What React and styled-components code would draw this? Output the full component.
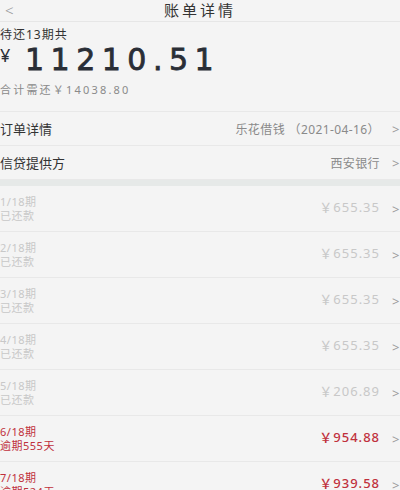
import React from 'react';
import styled, { createGlobalStyle } from 'styled-components';

const installments = [
  { period: '1/18期', status: '已还款', amount: '655.35', overdue: false },
  { period: '2/18期', status: '已还款', amount: '655.35', overdue: false },
  { period: '3/18期', status: '已还款', amount: '655.35', overdue: false },
  { period: '4/18期', status: '已还款', amount: '655.35', overdue: false },
  { period: '5/18期', status: '已还款', amount: '206.89', overdue: false },
  { period: '6/18期', status: '逾期555天', amount: '954.88', overdue: true },
  { period: '7/18期', status: '逾期524天', amount: '939.58', overdue: true },
];

const App = () => {
  return (
    <>
      <GlobalStyle />
      <Page>
        <NavBar>
          <BackButton>&lt;</BackButton>
          <NavTitle>账单详情</NavTitle>
          <span />
        </NavBar>

        <Summary>
          <SummaryLabel>待还13期共</SummaryLabel>
          <BigAmount>
            <Currency>¥</Currency>
            11210.51
          </BigAmount>
          <SummaryTotal>合计需还￥14038.80</SummaryTotal>
        </Summary>

        <InfoList>
          <InfoRow>
            <InfoLabel>订单详情</InfoLabel>
            <InfoValue>乐花借钱 （2021-04-16）</InfoValue>
            <Chevron>&gt;</Chevron>
          </InfoRow>
          <InfoRow>
            <InfoLabel>信贷提供方</InfoLabel>
            <InfoValue>西安银行</InfoValue>
            <Chevron>&gt;</Chevron>
          </InfoRow>
        </InfoList>

        <Band />

        {installments.map((item) => (
          <BillRow key={item.period}>
            <BillInfo>
              <BillText $overdue={item.overdue}>{item.period}</BillText>
              <BillText $overdue={item.overdue}>{item.status}</BillText>
            </BillInfo>
            <BillAmount $overdue={item.overdue}>￥{item.amount}</BillAmount>
            <Chevron>&gt;</Chevron>
          </BillRow>
        ))}
      </Page>
    </>
  );
};

const GlobalStyle = createGlobalStyle`
  html, body {
    margin: 0;
    padding: 0;
    background: #f4f4f4;
  }
  body {
    font-family: 'Noto Sans', 'Noto Sans CJK SC', sans-serif;
    overflow: hidden;
  }
`;

const Page = styled.div`
  width: 400px;
  height: 490px;
  overflow: hidden;
  background: #f4f4f4;
`;

const NavBar = styled.div`
  display: grid;
  grid-template-columns: 1fr auto 1fr;
  align-items: center;
  height: 21px;
  border-bottom: 1px solid #e6e6e6;
`;

const BackButton = styled.span`
  padding-left: 5px;
  color: #9a9a9a;
  font-size: 15px;
  font-weight: 300;
  line-height: 1;
`;

const NavTitle = styled.span`
  color: #333333;
  font-size: 15px;
  letter-spacing: 3px;
  line-height: 1;
`;

const Summary = styled.div`
  display: flex;
  flex-direction: column;
  padding: 6px 0 0;
  height: 83px;
  border-bottom: 1px solid #e8e8e8;
`;

const SummaryLabel = styled.div`
  color: #333333;
  font-size: 12px;
  line-height: 14px;
  letter-spacing: 1px;
`;

const BigAmount = styled.div`
  display: flex;
  align-items: flex-start;
  margin-top: 3px;
  color: #2a2e36;
  font-family: 'DejaVu Sans', sans-serif;
  font-size: 30px;
  line-height: 30px;
  letter-spacing: 6.5px;
  -webkit-text-stroke: 0.8px #2a2e36;
`;

const Currency = styled.span`
  width: 25px;
  margin-top: 1px;
  font-family: 'Noto Sans', sans-serif;
  font-size: 18px;
  line-height: 18px;
  letter-spacing: 0;
  -webkit-text-stroke: 0;
`;

const SummaryTotal = styled.div`
  margin-top: 8px;
  color: #8a8a8a;
  font-size: 11px;
  line-height: 14px;
  letter-spacing: 2.2px;
`;

const InfoList = styled.div`
  display: flex;
  flex-direction: column;
`;

const InfoRow = styled.div`
  display: flex;
  align-items: center;
  height: 33px;
  border-bottom: 1px solid #e8e8e8;
`;

const InfoLabel = styled.span`
  flex: 1;
  color: #333333;
  font-size: 13px;
`;

const InfoValue = styled.span`
  color: #8a8a8a;
  font-size: 12px;
  letter-spacing: 0.4px;
`;

const Chevron = styled.span`
  width: 20px;
  padding-left: 12px;
  color: #9a9a9a;
  font-size: 13px;
  box-sizing: border-box;
`;

const Band = styled.div`
  height: 6px;
  background: #e6e9e8;
`;

const BillRow = styled.div`
  display: flex;
  align-items: center;
  height: 46px;
  border-bottom: 1px solid #e8e8e8;
  box-sizing: border-box;
`;

const BillInfo = styled.div`
  flex: 1;
  display: flex;
  flex-direction: column;
`;

const BillText = styled.span`
  color: ${({ $overdue }) => ($overdue ? '#c0303c' : '#c8c8c8')};
  font-size: 11px;
  line-height: 14px;
  letter-spacing: 0.5px;
`;

const BillAmount = styled.span`
  margin-top: -4px;
  color: ${({ $overdue }) => ($overdue ? '#c0303c' : '#c8c8c8')};
  font-size: 13px;
  font-weight: ${({ $overdue }) => ($overdue ? 500 : 400)};
  letter-spacing: 1px;
`;

export default App;
